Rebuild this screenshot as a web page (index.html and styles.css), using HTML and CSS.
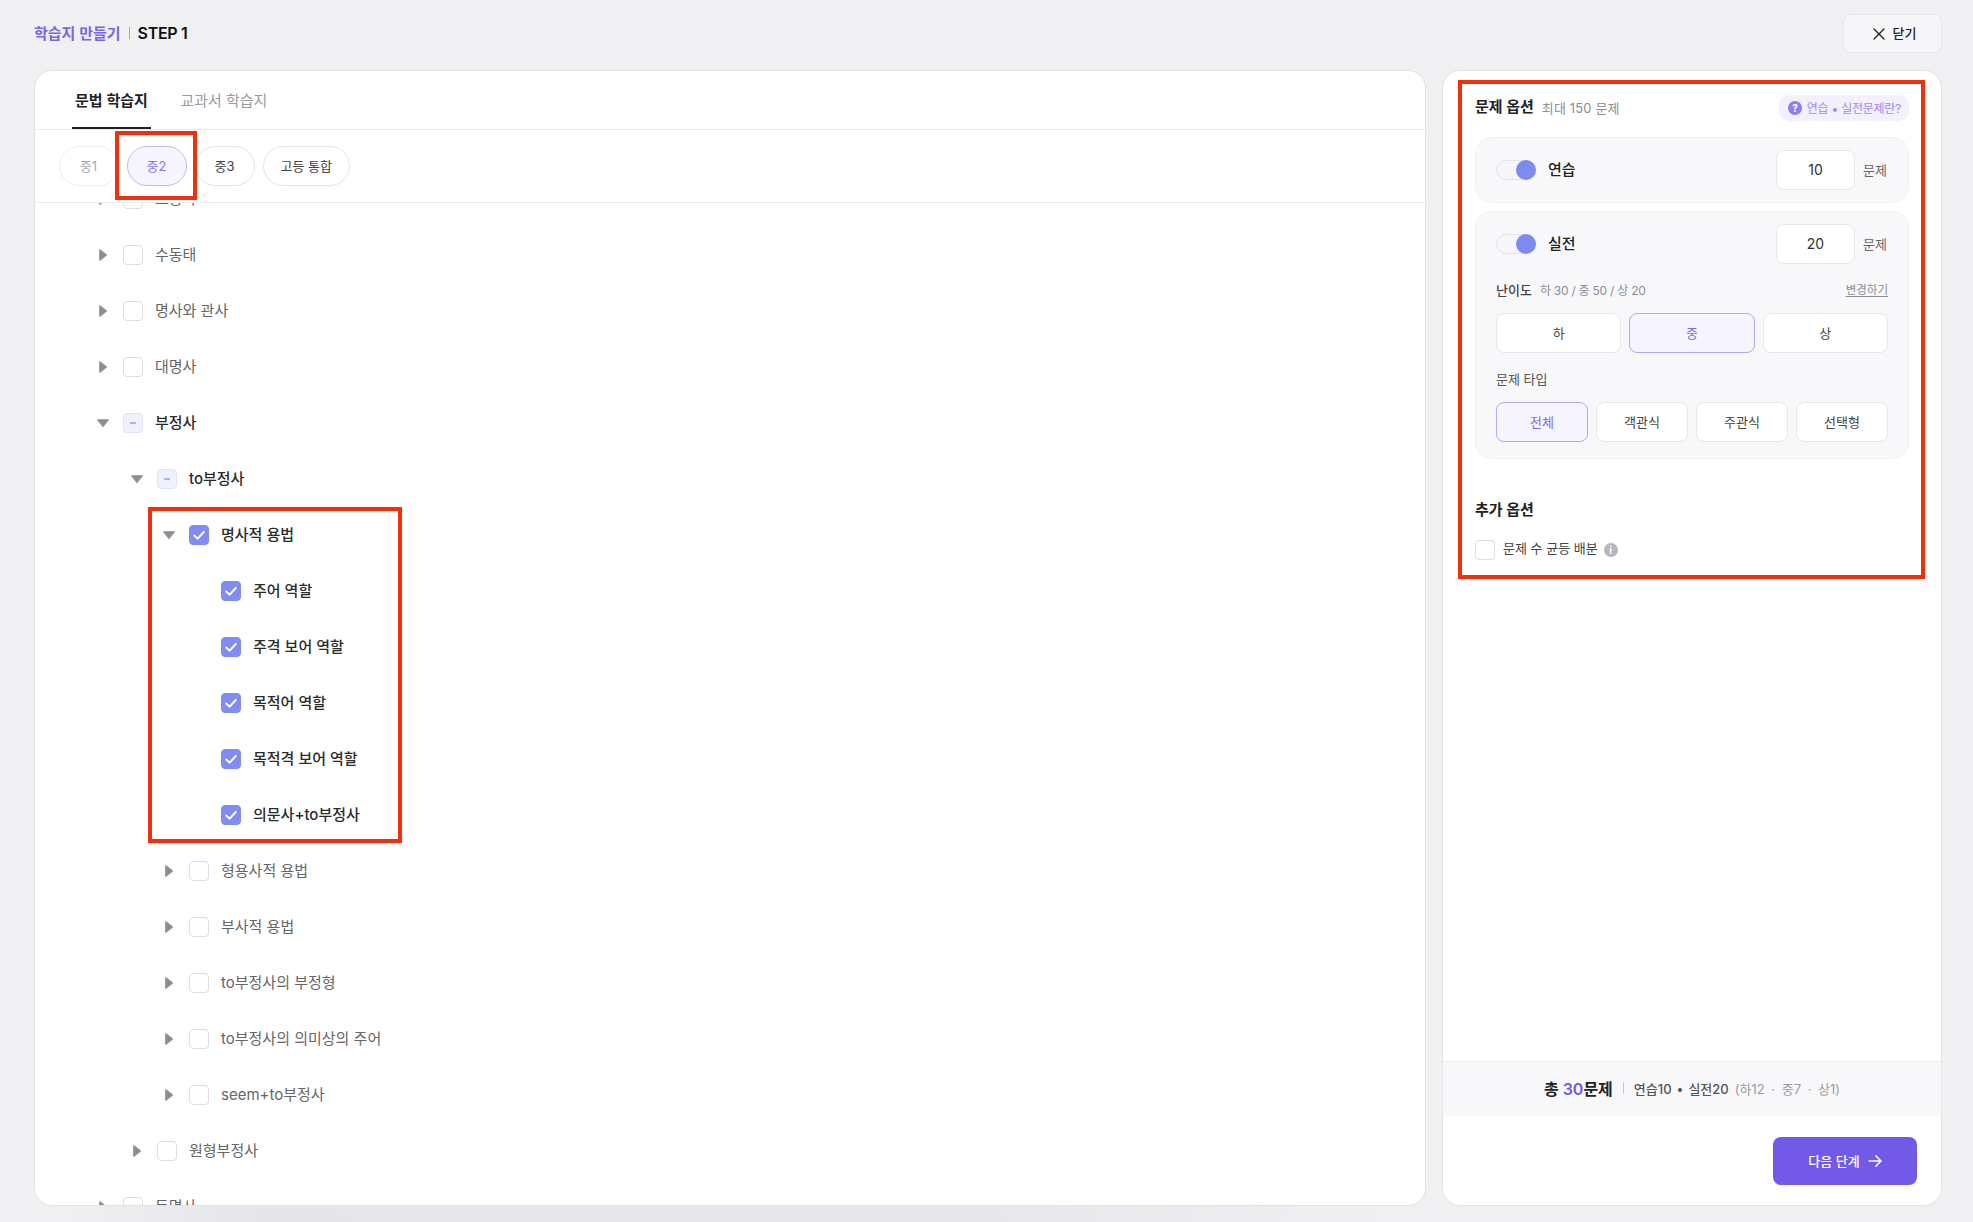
FILE: index.html
```html
<!DOCTYPE html>
<html lang="ko">
<head>
<meta charset="utf-8">
<title>학습지 만들기</title>
<link rel="stylesheet" href="styles.css">
</head>
<body>
<svg class="defs" width="0" height="0" aria-hidden="true">
  <symbol id="tri-r" viewBox="0 0 8 12"><path d="M.8 .8 7.4 6 .8 11.2Z" fill="#8e8e8e" stroke="#8e8e8e" stroke-width="1.2" stroke-linejoin="round"/></symbol>
  <symbol id="tri-d" viewBox="0 0 12 8"><path d="M.8 .8 6 7.4 11.2 .8Z" fill="#8e8e8e" stroke="#8e8e8e" stroke-width="1.2" stroke-linejoin="round"/></symbol>
  <symbol id="check" viewBox="0 0 20 20"><path d="M5.2 10.4 8.6 13.6 14.8 7" fill="none" stroke="#fff" stroke-width="2" stroke-linecap="round" stroke-linejoin="round"/></symbol>
</svg>
<div class="page">
  <header class="topbar">
    <div class="crumbs"><span class="crumb-main">학습지 만들기</span><i class="crumb-sep"></i><span class="crumb-step">STEP 1</span></div>
    <button class="close-btn"><svg class="close-icon" viewBox="0 0 12 12"><path d="M1 1 11 11M11 1 1 11" fill="none" stroke="#222" stroke-width="1.4" stroke-linecap="round"/></svg>닫기</button>
  </header>
  <main class="columns">
    <section class="card left-card">
      <nav class="tabs">
        <a class="tab tab-on">문법 학습지</a>
        <a class="tab">교과서 학습지</a>
      </nav>
      <div class="pills">
        <button class="pill pill-off">중1</button>
        <button class="pill pill-on">중2</button>
        <button class="pill">중3</button>
        <button class="pill">고등 통합</button>
      </div>
      <div class="tree-clip">
        <ul class="tree">
          <li class="row lv1"><svg class="tri"><use href="#tri-r"/></svg><span class="box"></span><span class="label">조동사</span></li>
          <li class="row lv1"><svg class="tri"><use href="#tri-r"/></svg><span class="box"></span><span class="label">수동태</span></li>
          <li class="row lv1"><svg class="tri"><use href="#tri-r"/></svg><span class="box"></span><span class="label">명사와 관사</span></li>
          <li class="row lv1"><svg class="tri"><use href="#tri-r"/></svg><span class="box"></span><span class="label">대명사</span></li>
          <li class="row lv1"><svg class="tri tri-open"><use href="#tri-d"/></svg><span class="box box-part"><i></i></span><span class="label label-on">부정사</span></li>
          <li class="row lv2"><svg class="tri tri-open"><use href="#tri-d"/></svg><span class="box box-part"><i></i></span><span class="label label-on">to부정사</span></li>
          <li class="row lv3"><svg class="tri tri-open"><use href="#tri-d"/></svg><span class="box box-on"><svg class="check"><use href="#check"/></svg></span><span class="label label-on">명사적 용법</span></li>
          <li class="row lv4"><span class="box box-on"><svg class="check"><use href="#check"/></svg></span><span class="label label-on">주어 역할</span></li>
          <li class="row lv4"><span class="box box-on"><svg class="check"><use href="#check"/></svg></span><span class="label label-on">주격 보어 역할</span></li>
          <li class="row lv4"><span class="box box-on"><svg class="check"><use href="#check"/></svg></span><span class="label label-on">목적어 역할</span></li>
          <li class="row lv4"><span class="box box-on"><svg class="check"><use href="#check"/></svg></span><span class="label label-on">목적격 보어 역할</span></li>
          <li class="row lv4"><span class="box box-on"><svg class="check"><use href="#check"/></svg></span><span class="label label-on">의문사+to부정사</span></li>
          <li class="row lv3"><svg class="tri"><use href="#tri-r"/></svg><span class="box"></span><span class="label">형용사적 용법</span></li>
          <li class="row lv3"><svg class="tri"><use href="#tri-r"/></svg><span class="box"></span><span class="label">부사적 용법</span></li>
          <li class="row lv3"><svg class="tri"><use href="#tri-r"/></svg><span class="box"></span><span class="label">to부정사의 부정형</span></li>
          <li class="row lv3"><svg class="tri"><use href="#tri-r"/></svg><span class="box"></span><span class="label">to부정사의 의미상의 주어</span></li>
          <li class="row lv3"><svg class="tri"><use href="#tri-r"/></svg><span class="box"></span><span class="label">seem+to부정사</span></li>
          <li class="row lv2"><svg class="tri"><use href="#tri-r"/></svg><span class="box"></span><span class="label">원형부정사</span></li>
          <li class="row lv1"><svg class="tri"><use href="#tri-r"/></svg><span class="box"></span><span class="label">동명사</span></li>
        </ul>
      </div>
    </section>
    <aside class="card right-card">
      <div class="options">
        <div class="opt-head">
          <div class="opt-title"><h2 class="h-title">문제 옵션</h2><span class="h-sub">최대 150 문제</span></div>
          <span class="badge"><i class="q-icon">?</i>연습 • 실전문제란?</span>
        </div>
        <div class="panel">
          <div class="panel-row">
            <span class="toggle"><i class="knob"></i></span>
            <span class="panel-name">연습</span>
            <input class="count" value="10">
            <span class="unit">문제</span>
          </div>
        </div>
        <div class="panel panel-second">
          <div class="panel-row">
            <span class="toggle"><i class="knob"></i></span>
            <span class="panel-name">실전</span>
            <input class="count" value="20">
            <span class="unit">문제</span>
          </div>
          <div class="sub-head sub-head-first">
            <span class="sub-label sub-strong">난이도</span><span class="sub-note">하 30 / 중 50 / 상 20</span><a class="sub-link">변경하기</a>
          </div>
          <div class="choice choice-3">
            <button class="opt">하</button><button class="opt opt-on">중</button><button class="opt">상</button>
          </div>
          <div class="sub-head"><span class="sub-label">문제 타입</span></div>
          <div class="choice choice-4">
            <button class="opt opt-on">전체</button><button class="opt">객관식</button><button class="opt">주관식</button><button class="opt">선택형</button>
          </div>
        </div>
        <h2 class="h-title h-extra">추가 옵션</h2>
        <label class="extra-row"><span class="box"></span><span class="extra-text">문제 수 균등 배분</span><i class="i-icon">i</i></label>
      </div>
      <div class="summary">
        <span class="sum-total">총 <b class="sum-num">30</b>문제</span>
        <i class="sum-sep"></i>
        <span class="sum-detail">연습10 • 실전20</span>
        <span class="sum-levels">(하12 · 중7 · 상1)</span>
      </div>
      <div class="actions">
        <button class="next-btn">다음 단계<svg class="next-icon" viewBox="0 0 14 14"><path d="M1 7H13M7.8 1.8 13 7 7.8 12.2" fill="none" stroke="#fff" stroke-width="1.5" stroke-linecap="round" stroke-linejoin="round"/></svg></button>
      </div>
    </aside>
  </main>
  <i class="mark mark-pill"></i>
  <i class="mark mark-tree"></i>
  <i class="mark mark-options"></i>
</div>
</body>
</html>
```
FILE: styles.css
```css
* { box-sizing: border-box; }
html, body { margin: 0; padding: 0; }
body {
  background: #f0f0f3;
  font-family: Inter, "Noto Sans CJK KR", "Noto Sans", sans-serif;
  color: #222;
  overflow: hidden;
}
button, input { font-family: inherit; }
.defs { position: absolute; }
.page {
  position: relative;
  width: 1973px;
  height: 1222px;
  padding: 14px 31px 0 34px;
  overflow: hidden;
}
.page::after {
  content: "";
  position: absolute;
  left: 0;
  right: 0;
  bottom: 0;
  height: 16px;
  background: linear-gradient(90deg, rgba(228,228,232,0) 60px, #e6e6ea 260px, #e8e8ec 1000px, rgba(228,228,232,0) 1400px);
}

/* top bar */
.topbar {
  display: flex;
  align-items: center;
  justify-content: space-between;
  height: 39px;
  margin-bottom: 17px;
}
.crumbs { display: flex; align-items: center; font-size: 15px; font-weight: 600; padding-bottom: 2px; }
.crumb-main { color: #7b63e6; }
.crumb-sep { width: 1px; height: 12px; background: #aaa; margin: 0 8px; }
.crumb-step { color: #111; font-weight: 600; font-size: 16px; letter-spacing: -.3px; }
.close-btn {
  display: flex;
  align-items: center;
  justify-content: center;
  gap: 8px;
  width: 99px;
  height: 39px;
  padding: 0 0 2px 4px;
  background: #f6f6f9;
  border: 1px solid #e6e6ec;
  border-radius: 8px;
  font-size: 13px;
  font-weight: 500;
  color: #222;
}
.close-icon { width: 12px; height: 12px; margin-top: 2px; }

/* columns */
.columns { display: flex; gap: 16px; height: 1136px; }
.card {
  display: flex;
  flex-direction: column;
  background: #fff;
  border: 1px solid #e2e2e7;
  border-radius: 18px;
  overflow: hidden;
}
.left-card { width: 1392px; }
.right-card { width: 500px; }

/* tabs */
.tabs {
  display: flex;
  gap: 26.5px;
  height: 59px;
  padding-left: 37px;
  border-bottom: 1px solid #e8e8ec;
}
.tab {
  display: flex;
  align-items: center;
  justify-content: center;
  height: 58px;
  padding: 0 3px;
  font-size: 15px;
  color: #9a9aa0;
  border-bottom: 2px solid transparent;
}
.tab-on { color: #222; font-weight: 600; border-bottom-color: #222; }

/* pills */
.pills {
  display: flex;
  gap: 8px;
  height: 73px;
  padding: 16px 0 16px 23.5px;
  border-bottom: 1px solid #ececf0;
}
.pill {
  min-width: 60px;
  height: 40px;
  padding: 0 17px 2px;
  background: #fff;
  border: 1px solid #e4e4e9;
  border-radius: 20px;
  font-size: 13px;
  color: #444;
}
.pill-off { color: #a8a8ae; border-color: #eeeef1; }
.pill-on { background: #f7f5ff; border-color: #c3b8f5; color: #8a75ec; }

/* tree */
.tree-clip { flex: 1; overflow: hidden; min-height: 0; }
.tree { list-style: none; margin: -32px 0 0; padding: 0; }
.row { display: flex; align-items: center; height: 56px; }
.lv1 { padding-left: 62px; }
.lv2 { padding-left: 96px; }
.lv3 { padding-left: 128px; }
.lv4 { padding-left: 186px; }
.tri { width: 8px; height: 12px; margin: 0 16px 0 2px; flex: none; }
.tri-open { width: 12px; height: 8px; margin: 0 14px 0 0; }
.box {
  display: flex;
  align-items: center;
  justify-content: center;
  flex: none;
  width: 20px;
  height: 20px;
  background: #fff;
  border: 1.5px solid #dddde2;
  border-radius: 4px;
}
.box-part { background: #eff1fd; border-color: #dfe3f9; }
.box-part i { width: 6px; height: 1.5px; background: #aab2f2; }
.box-on { background: #7f8cf2; border-color: #7f8cf2; }
.check { width: 20px; height: 20px; flex: none; }
.label { margin: 0 0 4px 12px; font-size: 15px; color: #666; white-space: nowrap; }
.label-on { color: #2b2b2b; font-weight: 500; }

/* options */
.options { flex: 1; padding: 24px 32px 0 32px; }
.opt-head { display: flex; align-items: center; justify-content: space-between; height: 26px; margin-bottom: 16px; }
.opt-title { display: flex; align-items: center; gap: 8px; padding-bottom: 2px; }
.h-title { margin: 0; font-size: 15px; font-weight: 700; color: #222; line-height: 20px; }
.h-sub { font-size: 13px; color: #8c8c94; letter-spacing: .15px; }
.badge {
  display: flex;
  align-items: center;
  gap: 5px;
  height: 26px;
  padding: 0 8px 1px 9px;
  background: #f4f1ff;
  border-radius: 10px;
  font-size: 12px;
  letter-spacing: -.25px;
  color: #9c89f0;
}
.q-icon, .i-icon {
  display: flex;
  align-items: center;
  justify-content: center;
  width: 14px;
  height: 14px;
  border-radius: 50%;
  font-style: normal;
  font-size: 10px;
  font-weight: 700;
  color: #fff;
}
.q-icon { background: #917cf2; margin-top: 1px; }
.panel {
  padding: 12px 20px;
  background: #f8f8fb;
  border: 1px solid #f2f2f6;
  border-radius: 16px;
}
.panel-second { margin-top: 8px; padding-bottom: 16px; }
.panel-row { display: flex; align-items: center; height: 40px; }
.toggle {
  display: flex;
  justify-content: flex-end;
  width: 40px;
  height: 20px;
  background: #f6f6f9;
  border: 1px solid #e4e4ea;
  border-radius: 10px;
}
.knob { width: 20px; height: 20px; margin: -1px -1px 0 0; background: #7d8bf1; border-radius: 50%; flex: none; }
.panel-name { margin: 0 0 4px 12px; font-size: 15px; font-weight: 500; color: #222; flex: 1; }
.count {
  width: 79px;
  height: 40px;
  padding: 0 0 1px;
  background: #fff;
  border: 1px solid #e6e6ec;
  border-radius: 8px;
  text-align: center;
  font-size: 14px;
  color: #333;
  outline: none;
}
.unit { margin: 0 0 2px 8px; width: 25px; font-size: 13px; color: #666; white-space: nowrap; }
.sub-head { display: flex; align-items: center; height: 20px; margin: 16px 0 13px; padding-bottom: 2px; }
.sub-head-first { margin-top: 16px; }
.sub-label { font-size: 13px; color: #555; }
.sub-strong { font-weight: 500; color: #444; }
.sub-note { margin-left: 8px; font-size: 12px; letter-spacing: -.25px; color: #8c8c94; flex: 1; }
.sub-link { font-size: 11.5px; color: #8c8c94; text-decoration: underline; text-underline-offset: 2px; }
.choice { display: grid; gap: 8px; }
.choice-3 { grid-template-columns: repeat(3, 1fr); }
.choice-4 { grid-template-columns: repeat(4, 1fr); }
.opt {
  height: 40px;
  padding: 0 0 2px;
  background: #fff;
  border: 1px solid #e6e6ec;
  border-radius: 8px;
  font-size: 13px;
  color: #444;
}
.opt-on { background: #f6f4ff; border-color: #b5a8f2; color: #7f6bea; }
.h-extra { margin-top: 41px; }
.extra-row { display: flex; align-items: center; height: 20px; margin-top: 20px; }
.extra-text { margin: 0 0 4px 8px; font-size: 13px; line-height: 16px; color: #444; }
.i-icon { margin-left: 6px; background: #b6b6c2; }

/* footer */
.summary {
  display: flex;
  align-items: center;
  justify-content: center;
  height: 55px;
  padding-bottom: 2px;
  background: #f8f8fb;
  border-top: 1px solid #eeeef2;
  font-size: 13px;
}
.sum-total { font-size: 16px; font-weight: 600; color: #222; }
.sum-num { color: #7259e8; font-weight: 600; }
.sum-sep { width: 1px; height: 12px; margin: 0 10px; background: #c8c8ce; }
.sum-detail { color: #555; font-weight: 500; word-spacing: 1.5px; }
.sum-levels { margin-left: 6px; color: #9a9aa2; word-spacing: 3px; }
.actions { display: flex; justify-content: flex-end; padding: 21px 24px 20px; }
.next-btn {
  display: flex;
  align-items: center;
  justify-content: center;
  gap: 8px;
  width: 144px;
  height: 48px;
  padding: 0 0 2px;
  background: #7259e8;
  border: 0;
  border-radius: 8px;
  font-size: 13px;
  font-weight: 500;
  color: #fff;
}
.next-icon { width: 14px; height: 14px; margin-top: 2px; }

/* red annotation frames lying over the page */
.mark { position: absolute; border: 4px solid #f02f0c; z-index: 5; pointer-events: none; }
.mark-pill { left: 115px; top: 131px; width: 82px; height: 69px; }
.mark-tree { left: 148px; top: 507px; width: 254px; height: 336px; }
.mark-options { left: 1458px; top: 80px; width: 467px; height: 499px; }
```
